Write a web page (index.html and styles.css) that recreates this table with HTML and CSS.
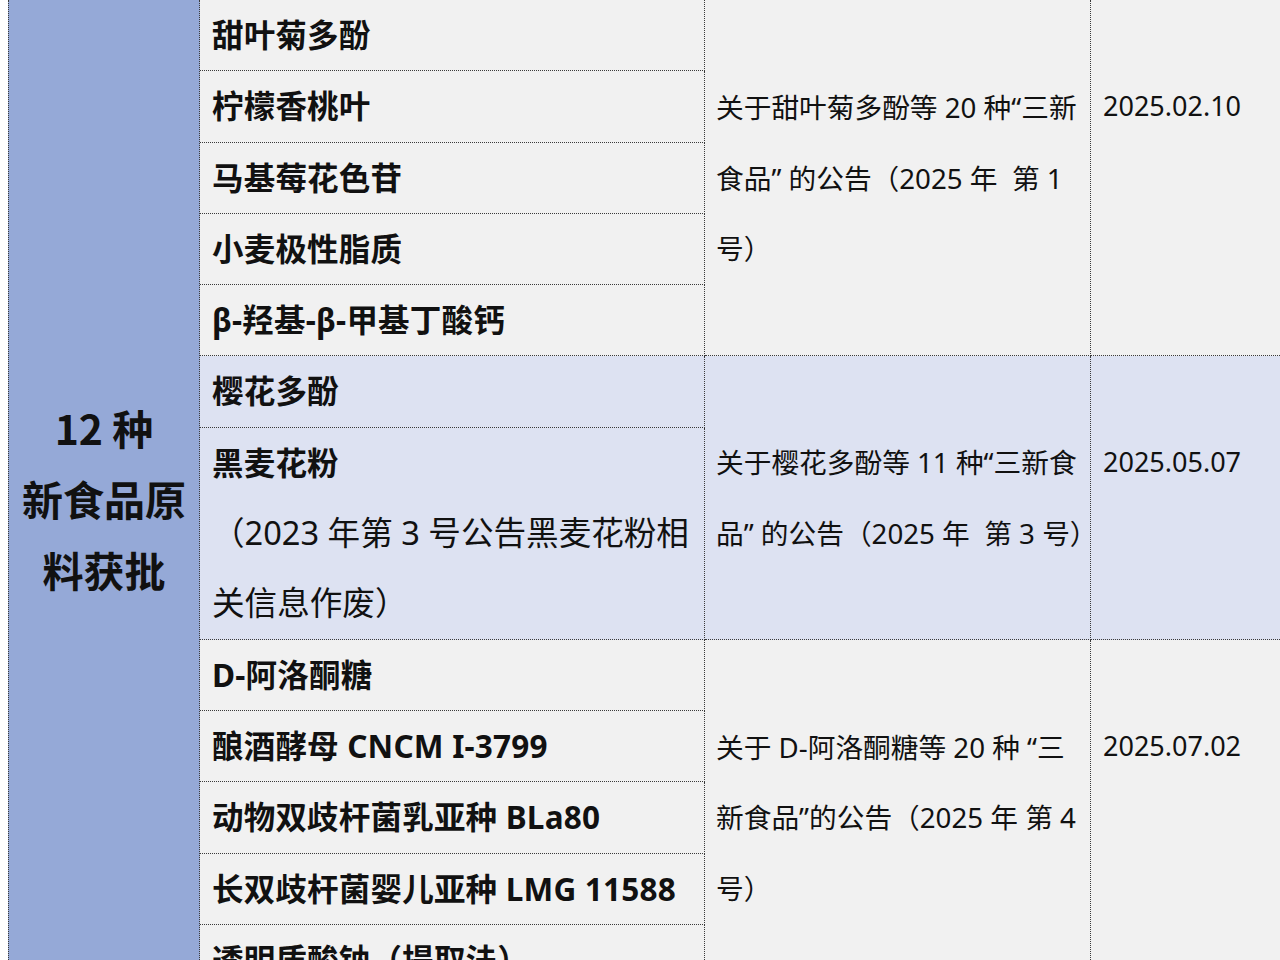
FILE: index.html
```html
<!DOCTYPE html>
<html lang="zh-CN">
<head>
<meta charset="utf-8">
<title>新食品原料获批</title>
<link rel="stylesheet" href="styles.css">
</head>
<body>
<table class="grid">
  <tbody>
    <tr class="g1">
      <td class="c1" rowspan="12">12 种<br>新食品原<br>料获批</td>
      <td class="c2 name">甜叶菊多酚</td>
      <td class="c3" rowspan="5">关于甜叶菊多酚等 20 种“三新<br>食品” 的公告（2025 年&nbsp; 第 1<br>号）</td>
      <td class="c4" rowspan="5">2025.02.10</td>
    </tr>
    <tr class="g1"><td class="c2 name">柠檬香桃叶</td></tr>
    <tr class="g1"><td class="c2 name">马基莓花色苷</td></tr>
    <tr class="g1"><td class="c2 name">小麦极性脂质</td></tr>
    <tr class="g1"><td class="c2 name">β-羟基-β-甲基丁酸钙</td></tr>
    <tr class="g2">
      <td class="c2 name">樱花多酚</td>
      <td class="c3" rowspan="2">关于樱花多酚等 11 种“三新食<br>品” 的公告（2025 年&nbsp; 第 3 号）</td>
      <td class="c4" rowspan="2">2025.05.07</td>
    </tr>
    <tr class="g2"><td class="c2"><span class="name">黑麦花粉</span><br>（2023 年第 3 号公告黑麦花粉相<br>关信息作废）</td></tr>
    <tr class="g3">
      <td class="c2 name">D-阿洛酮糖</td>
      <td class="c3" rowspan="5">关于 D-阿洛酮糖等 20 种 “三<br>新食品”的公告（2025 年 第 4<br>号）</td>
      <td class="c4" rowspan="5">2025.07.02</td>
    </tr>
    <tr class="g3"><td class="c2 name">酿酒酵母 CNCM I-3799</td></tr>
    <tr class="g3"><td class="c2 name">动物双歧杆菌乳亚种 BLa80</td></tr>
    <tr class="g3"><td class="c2 name">长双歧杆菌婴儿亚种 LMG 11588</td></tr>
    <tr class="g3"><td class="c2 name">透明质酸钠（提取法）</td></tr>
  </tbody>
</table>
</body>
</html>
```

FILE: styles.css
```css
html, body {
  margin: 0;
  padding: 0;
  overflow: hidden;
  background: #ffffff;
}

body {
  padding-left: 8px;
  font-family: "Noto Sans", "Noto Sans CJK SC", sans-serif;
  color: #111111;
}

.grid {
  border-collapse: separate;
  border-spacing: 0;
  table-layout: fixed;
  width: 1384px;
}

.grid td {
  border-right: 1px dotted #3a3a3a;
  border-bottom: 1px dotted #3a3a3a;
  padding: 0;
  line-height: 70.3px;
  white-space: nowrap;
}

.g1 td, .g3 td {
  background: #f1f1f1;
}

.g2 td {
  background: #dde2f2;
}

.grid td.c1 {
  width: 190px;
  border-left: 1px dotted #3a3a3a;
  background: #95a9d7;
  text-align: center;
  vertical-align: middle;
  font-family: "Noto Sans CJK SC", sans-serif;
  font-weight: 700;
  font-size: 41px;
  line-height: 71px;
  padding-top: 2px;
}

.c2 {
  width: 492px;
  padding-left: 12px !important;
  font-size: 32.6px;
  vertical-align: middle;
}

.name {
  font-weight: 700;
  font-size: 31.5px;
  letter-spacing: 0.2px;
}

.c3 {
  width: 374px;
  padding-left: 11px !important;
  font-size: 27.7px;
  vertical-align: middle;
}

.c4 {
  width: 288px;
  padding-left: 12px !important;
  padding-top: 71px !important;
  font-size: 27px;
  vertical-align: top;
}
```
